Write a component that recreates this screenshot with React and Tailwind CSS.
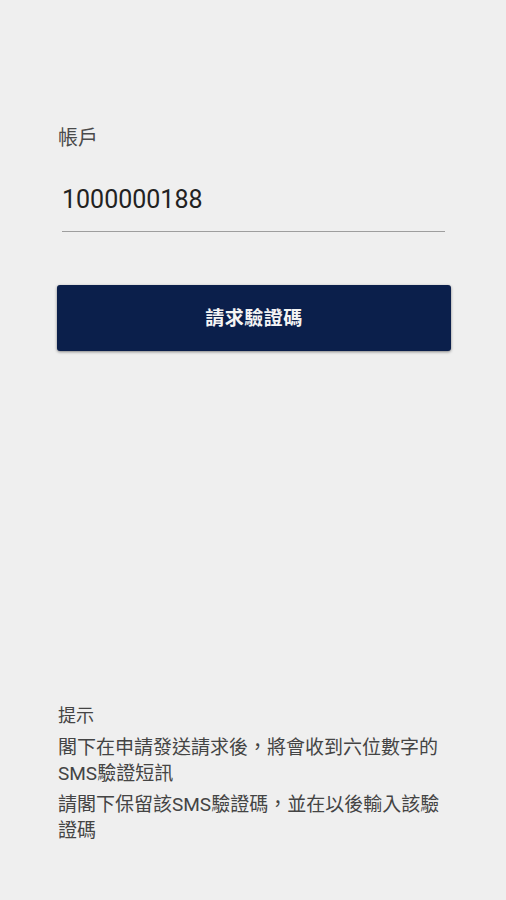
export default function App() {
  return (
    <div className="h-[900px] w-full bg-[#efefef] flex flex-col font-['Roboto','Noto_Sans_CJK_TC',sans-serif] pl-[57px] pr-[55px]">
      <div className="pt-[124px]">
        <div className="pl-px text-[20px] leading-[28px] text-[#4a4a4a]">帳戶</div>
        <div className="mt-[33px] ml-[5px] mr-[6px] border-b-[1.5px] border-[#9e9e9e] pb-[16px]">
          <div className="text-[25px] leading-[30px] text-[#222]">1000000188</div>
        </div>
        <button className="mt-[53px] w-full h-[66px] pt-[3px] rounded-[3px] bg-[#0b1f4b] shadow-[0_1px_3px_rgba(0,0,0,0.45)] text-[#f4f4f4] text-[19px] font-bold tracking-[0.5px]">
          請求驗證碼
        </button>
      </div>

      <div className="mt-auto pb-[56px] pl-px text-[#444]">
        <div className="text-[18px] leading-[26px]">提示</div>
        <p className="mt-[6px] text-[19px] leading-[26px]">閣下在申請發送請求後，將會收到六位數字的SMS驗證短訊</p>
        <p className="mt-[5px] text-[19px] leading-[26px]">請閣下保留該SMS驗證碼，並在以後輸入該驗證碼</p>
      </div>
    </div>
  );
}
